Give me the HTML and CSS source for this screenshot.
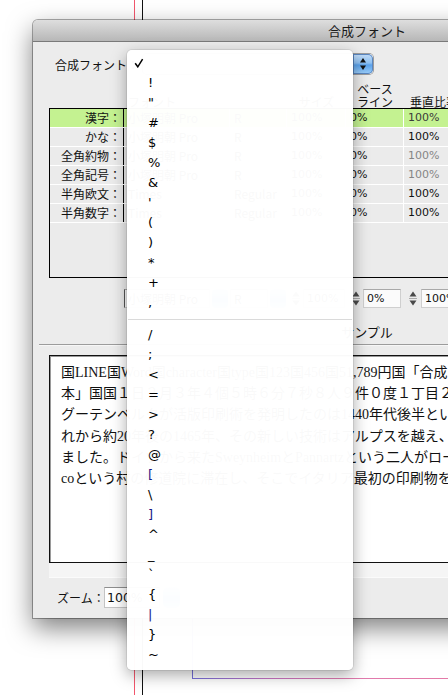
FILE: index.html
```html
<!DOCTYPE html>
<html lang="ja">
<head>
<meta charset="utf-8">
<title>合成フォント</title>
<link rel="stylesheet" href="styles.css">
</head>
<body>
<div class="desk">
  <div class="guide guide-red"></div>
  <div class="guide guide-black"></div>
  <div class="guide guide-frame-v"></div>
  <div class="guide guide-frame-h"></div>

  <div class="dialog">
    <div class="titlebar">合成フォント</div>
    <div class="dlg-body">
      <div class="font-row">
        <span class="font-label">合成フォント：</span>
        <div class="popup">
          <span class="popup-value"></span>
          <span class="aqua-btn">
            <svg width="20" height="20" viewBox="0 0 20 20"><path d="M10 4 L13 8.5 H7Z" fill="#111"/><path d="M10 16 L13 11.5 H7Z" fill="#111"/></svg>
          </span>
        </div>
      </div>

      <div class="grid-head">
        <div class="hcell"></div>
        <div class="hcell left">フォント</div>
        <div class="hcell"></div>
        <div class="hcell">サイズ</div>
        <div class="hcell">ベース<br>ライン</div>
        <div class="hcell">垂直比率</div>
        <div class="hcell">水平比率</div>
      </div>

      <div class="table">
        <div class="row sel">
          <div class="cell lab">漢字：</div><div class="cell">小塚明朝 Pro</div><div class="cell">R</div><div class="cell num">100%</div><div class="cell num">0%</div><div class="cell num dim1">100%</div><div class="cell num">100%</div>
        </div>
        <div class="row">
          <div class="cell lab">かな：</div><div class="cell">小塚明朝 Pro</div><div class="cell">R</div><div class="cell num">100%</div><div class="cell num">0%</div><div class="cell num">100%</div><div class="cell num">100%</div>
        </div>
        <div class="row">
          <div class="cell lab">全角約物：</div><div class="cell">小塚明朝 Pro</div><div class="cell">R</div><div class="cell num">100%</div><div class="cell num">0%</div><div class="cell num dim">100%</div><div class="cell num dim">100%</div>
        </div>
        <div class="row">
          <div class="cell lab">全角記号：</div><div class="cell">小塚明朝 Pro</div><div class="cell">R</div><div class="cell num">100%</div><div class="cell num">0%</div><div class="cell num dim">100%</div><div class="cell num dim">100%</div>
        </div>
        <div class="row">
          <div class="cell lab">半角欧文：</div><div class="cell">Times</div><div class="cell">Regular</div><div class="cell num">100%</div><div class="cell num">0%</div><div class="cell num">100%</div><div class="cell num">100%</div>
        </div>
        <div class="row">
          <div class="cell lab">半角数字：</div><div class="cell">Times</div><div class="cell">Regular</div><div class="cell num">100%</div><div class="cell num">0%</div><div class="cell num">100%</div><div class="cell num">100%</div>
        </div>
      </div>

      <div class="controls">
        <div class="field f-font">小塚明朝 Pro</div>
        <span class="aqua-mini"></span>
        <div class="field f-style">R</div>
        <span class="aqua-mini"></span>
        <span class="stepper s-size"><svg width="10" height="19" viewBox="0 0 10 19"><path d="M5 2.5 L8.5 7.5 H1.5Z" fill="#4a4a4a"/><path d="M1 9.5H9" stroke="#aaa"/><path d="M5 16.5 L8.5 11.5 H1.5Z" fill="#4a4a4a"/></svg></span>
        <div class="field f-size">100%</div>
        <span class="stepper s-base"><svg width="10" height="19" viewBox="0 0 10 19"><path d="M5 2.5 L8.5 7.5 H1.5Z" fill="#4a4a4a"/><path d="M1 9.5H9" stroke="#aaa"/><path d="M5 16.5 L8.5 11.5 H1.5Z" fill="#4a4a4a"/></svg></span>
        <div class="field f-base">0%</div>
        <span class="stepper s-vert"><svg width="10" height="19" viewBox="0 0 10 19"><path d="M5 2.5 L8.5 7.5 H1.5Z" fill="#4a4a4a"/><path d="M1 9.5H9" stroke="#aaa"/><path d="M5 16.5 L8.5 11.5 H1.5Z" fill="#4a4a4a"/></svg></span>
        <div class="field f-vert">100%</div>
      </div>

      <div class="tab-label">サンプル</div>
      <div class="tab-rule"></div>

      <div class="sample">国LINE国Word国character国type国123国456国51,789円国「合成フォント見<br>本」国国１日２月３年４個５時６分７秒８人９件０度１丁目２番地<br>グーテンベルクが活版印刷術を発明したのは1440年代後半とい<br>れから約20年後の1465年、その新しい技術はアルプスを越え、<br>ました。ドイツから来たSweynheimとPannartzという二人がロー<br>coという村の修道院に滞在し、そこでイタリア最初の印刷物を</div>
      <div class="hscroll"></div>

      <div class="zoom-row">
        <span class="zoom-label">ズーム：</span>
        <div class="zoom-field">100%</div>
        <span class="aqua-zoom"></span>
      </div>
    </div>
  </div>

  <div class="menu">
    <div class="mi"><svg class="check" width="10" height="10" viewBox="0 0 10 10"><path d="M1.2 5.2 L3.8 8.8 L8.6 1.2" fill="none" stroke="#000" stroke-width="1.5"/></svg></div>
    <div class="mi">!</div>
    <div class="mi">"</div>
    <div class="mi">#</div>
    <div class="mi">$</div>
    <div class="mi">%</div>
    <div class="mi">&amp;</div>
    <div class="mi">'</div>
    <div class="mi">(</div>
    <div class="mi">)</div>
    <div class="mi">*</div>
    <div class="mi">+</div>
    <div class="mi">,</div>
    <div class="sep"></div>
    <div class="mi">/</div>
    <div class="mi">;</div>
    <div class="mi">&lt;</div>
    <div class="mi">=</div>
    <div class="mi">&gt;</div>
    <div class="mi">?</div>
    <div class="mi">@</div>
    <div class="mi navy">[</div>
    <div class="mi">\</div>
    <div class="mi navy">]</div>
    <div class="mi">^</div>
    <div class="mi">_</div>
    <div class="mi">`</div>
    <div class="mi">{</div>
    <div class="mi navy">|</div>
    <div class="mi">}</div>
    <div class="mi">~</div>
  </div>
</div>
</body>
</html>
```
FILE: styles.css
```css
* { box-sizing: border-box; }
html, body { margin: 0; padding: 0; }
body {
  width: 448px;
  height: 695px;
  overflow: hidden;
  background: #fff;
  font-family: "Noto Sans CJK JP", sans-serif;
  color: #111;
}
.desk { position: relative; width: 448px; height: 695px; overflow: hidden; }

.guide { position: absolute; }
.guide-red { left: 134px; top: 0; width: 1px; height: 695px; background: #f2566c; }
.guide-black { left: 142px; top: 0; width: 1px; height: 695px; background: #111; }
.guide-frame-v { left: 192px; top: 560px; width: 1px; height: 119px; background: #7670dc; }
.guide-frame-h { left: 192px; top: 678px; width: 256px; height: 1px; background: linear-gradient(90deg, #7670dc, #c874c4 30%, #e07aae 60%, #e47aa8); }

.dialog {
  position: absolute;
  left: 33px;
  top: 20px;
  width: 668px;
  height: 598px;
  background: #ececec;
  border-radius: 5px 5px 0 0;
  box-shadow: 0 0 0 1px rgba(0,0,0,0.32), 0 10px 26px rgba(0,0,0,0.5);
  display: flex;
  flex-direction: column;
}
.titlebar {
  height: 22px;
  flex: none;
  background: linear-gradient(#dedede, #b7b7b7);
  border-bottom: 1px solid #7a7a7a;
  border-radius: 5px 5px 0 0;
  text-align: center;
  font-size: 13px;
  line-height: 21px;
  color: #1a1a1a;
}
.dlg-body { flex: 1; display: flex; flex-direction: column; }

.font-row {
  display: flex;
  align-items: center;
  height: 20px;
  margin-top: 12px;
  padding-left: 22px;
  font-size: 12px;
}
.font-label { width: 88px; white-space: nowrap; }
.popup {
  display: flex;
  width: 230px;
  height: 20px;
  border-radius: 4px;
  background: linear-gradient(#ffffff, #ececec);
  box-shadow: 0 0 0 1px #9c9c9c;
}
.popup-value { flex: 1; }
.aqua-btn {
  width: 20px;
  height: 20px;
  border-radius: 0 5px 5px 0;
  background: linear-gradient(#c4def8 0%, #8ec0f2 45%, #5aa2ec 55%, #9fd0fa 100%);
  box-shadow: inset 0 0 0 1px #5a86c0;
  display: block;
}
.aqua-btn svg { display: block; }

.grid-head,
.row {
  display: grid;
  grid-template-columns: 74px 106px 57px 59px 58px 60px 60px;
}
.grid-head {
  margin-left: 17px;
  height: 34px;
  align-items: end;
  font-size: 12px;
  line-height: 13px;
}
.hcell { text-align: center; white-space: nowrap; }
.hcell.left { text-align: left; padding-left: 4px; }

.table {
  margin-left: 16px;
  width: 636px;
  height: 170px;
  flex: none;
  border: 1px solid #000;
  background: #ebebeb;
}
.row {
  height: 19px;
  border-bottom: 1px solid #fff;
  font-size: 12px;
  line-height: 18px;
}
.row.sel { background: #c4f291; }
.cell {
  border-right: 1px solid #fff;
  padding-left: 4px;
  white-space: nowrap;
  overflow: hidden;
}
.cell.lab {
  border-right: 1px solid #000;
  text-align: right;
  padding-left: 0;
  padding-right: 2px;
}
.num { font-family: "DejaVu Sans", sans-serif; font-size: 11px; }
.dim { color: #858585; }
.dim1 { color: #3a3a3a; }

.controls {
  display: flex;
  align-items: center;
  height: 19px;
  margin-top: 11px;
  padding-left: 91px;
  font-size: 12px;
}
.field {
  height: 19px;
  background: #fbfbfb;
  border: 1px solid #cfcfcf;
  border-top-color: #a9a9a9;
  padding-left: 3px;
  line-height: 17px;
  white-space: nowrap;
  overflow: hidden;
  font-family: "DejaVu Sans", sans-serif;
  font-size: 11px;
}
.f-font { width: 86px; font-family: "Noto Sans CJK JP", sans-serif; font-size: 12px; border-left-color: #555; }
.f-style { width: 38px; margin-left: 2px; font-family: "Noto Sans CJK JP", sans-serif; font-size: 12px; }
.f-size { width: 42px; margin-left: 2px; }
.f-base { width: 38px; margin-left: 2px; }
.f-vert { width: 40px; margin-left: 3px; }
.aqua-mini {
  width: 16px;
  height: 19px;
  margin-left: 2px;
  border-radius: 4px;
  background: linear-gradient(#c4def8, #5aa2ec 55%, #9fd0fa);
}
.stepper { width: 10px; height: 19px; display: block; }
.stepper svg { display: block; }
.s-size { margin-left: 5px; }
.s-base { margin-left: 6px; }
.s-vert { margin-left: 7px; }

.tab-label {
  margin-top: 16px;
  height: 16px;
  text-align: center;
  font-size: 13px;
  line-height: 16px;
}
.tab-rule {
  margin: 4px 6px 0;
  height: 2px;
  border-top: 1px solid #9c9c9c;
  border-bottom: 1px solid #f7f7f7;
}

.sample {
  margin: 9px 16px 0;
  height: 208px;
  flex: none;
  background: #fff;
  border: 1px solid #111;
  box-shadow: inset 1px 1px 0 #9a9a9a;
  padding: 6px 0 0 11px;
  font-family: "Liberation Serif", "Noto Sans CJK JP", serif;
  font-size: 14px;
  line-height: 21.2px;
  white-space: nowrap;
  overflow: hidden;
  color: #111;
}
.hscroll {
  margin: 0 16px;
  height: 15px;
  background: #f5f5f5;
  border-bottom: 1px solid #fbfbfb;
}

.zoom-row {
  display: flex;
  align-items: center;
  height: 21px;
  margin-top: 9px;
  padding-left: 24px;
  font-size: 12px;
}
.zoom-label { width: 47px; white-space: nowrap; }
.zoom-field {
  width: 56px;
  height: 21px;
  background: #fff;
  border: 1px solid #c4c4c4;
  border-top-color: #8e8e8e;
  padding-left: 2px;
  line-height: 19px;
  font-family: "DejaVu Sans", sans-serif;
  font-size: 12.5px;
}
.aqua-zoom {
  width: 17px;
  height: 21px;
  margin-left: 3px;
  border-radius: 5px;
  background: linear-gradient(#c4def8, #5aa2ec 55%, #9fd0fa);
}

.menu {
  position: absolute;
  left: 127px;
  top: 50px;
  width: 226px;
  height: 620px;
  background: rgba(255,255,255,0.975);
  border-radius: 5px;
  box-shadow: 0 5px 16px rgba(0,0,0,0.35), 0 0 0 1px rgba(0,0,0,0.07);
  padding-top: 3px;
  font-family: "DejaVu Sans", sans-serif;
  font-size: 13px;
  color: #000;
}
.mi {
  position: relative;
  height: 20px;
  line-height: 20px;
  padding-left: 21px;
}
.mi.navy { color: #1a1a88; }
.check { position: absolute; left: 7px; top: 5px; }
.sep { height: 12px; display: flex; align-items: center; }
.sep::after { content: ""; flex: 1; height: 1px; background: #dadada; margin: 0 1px; }
```
